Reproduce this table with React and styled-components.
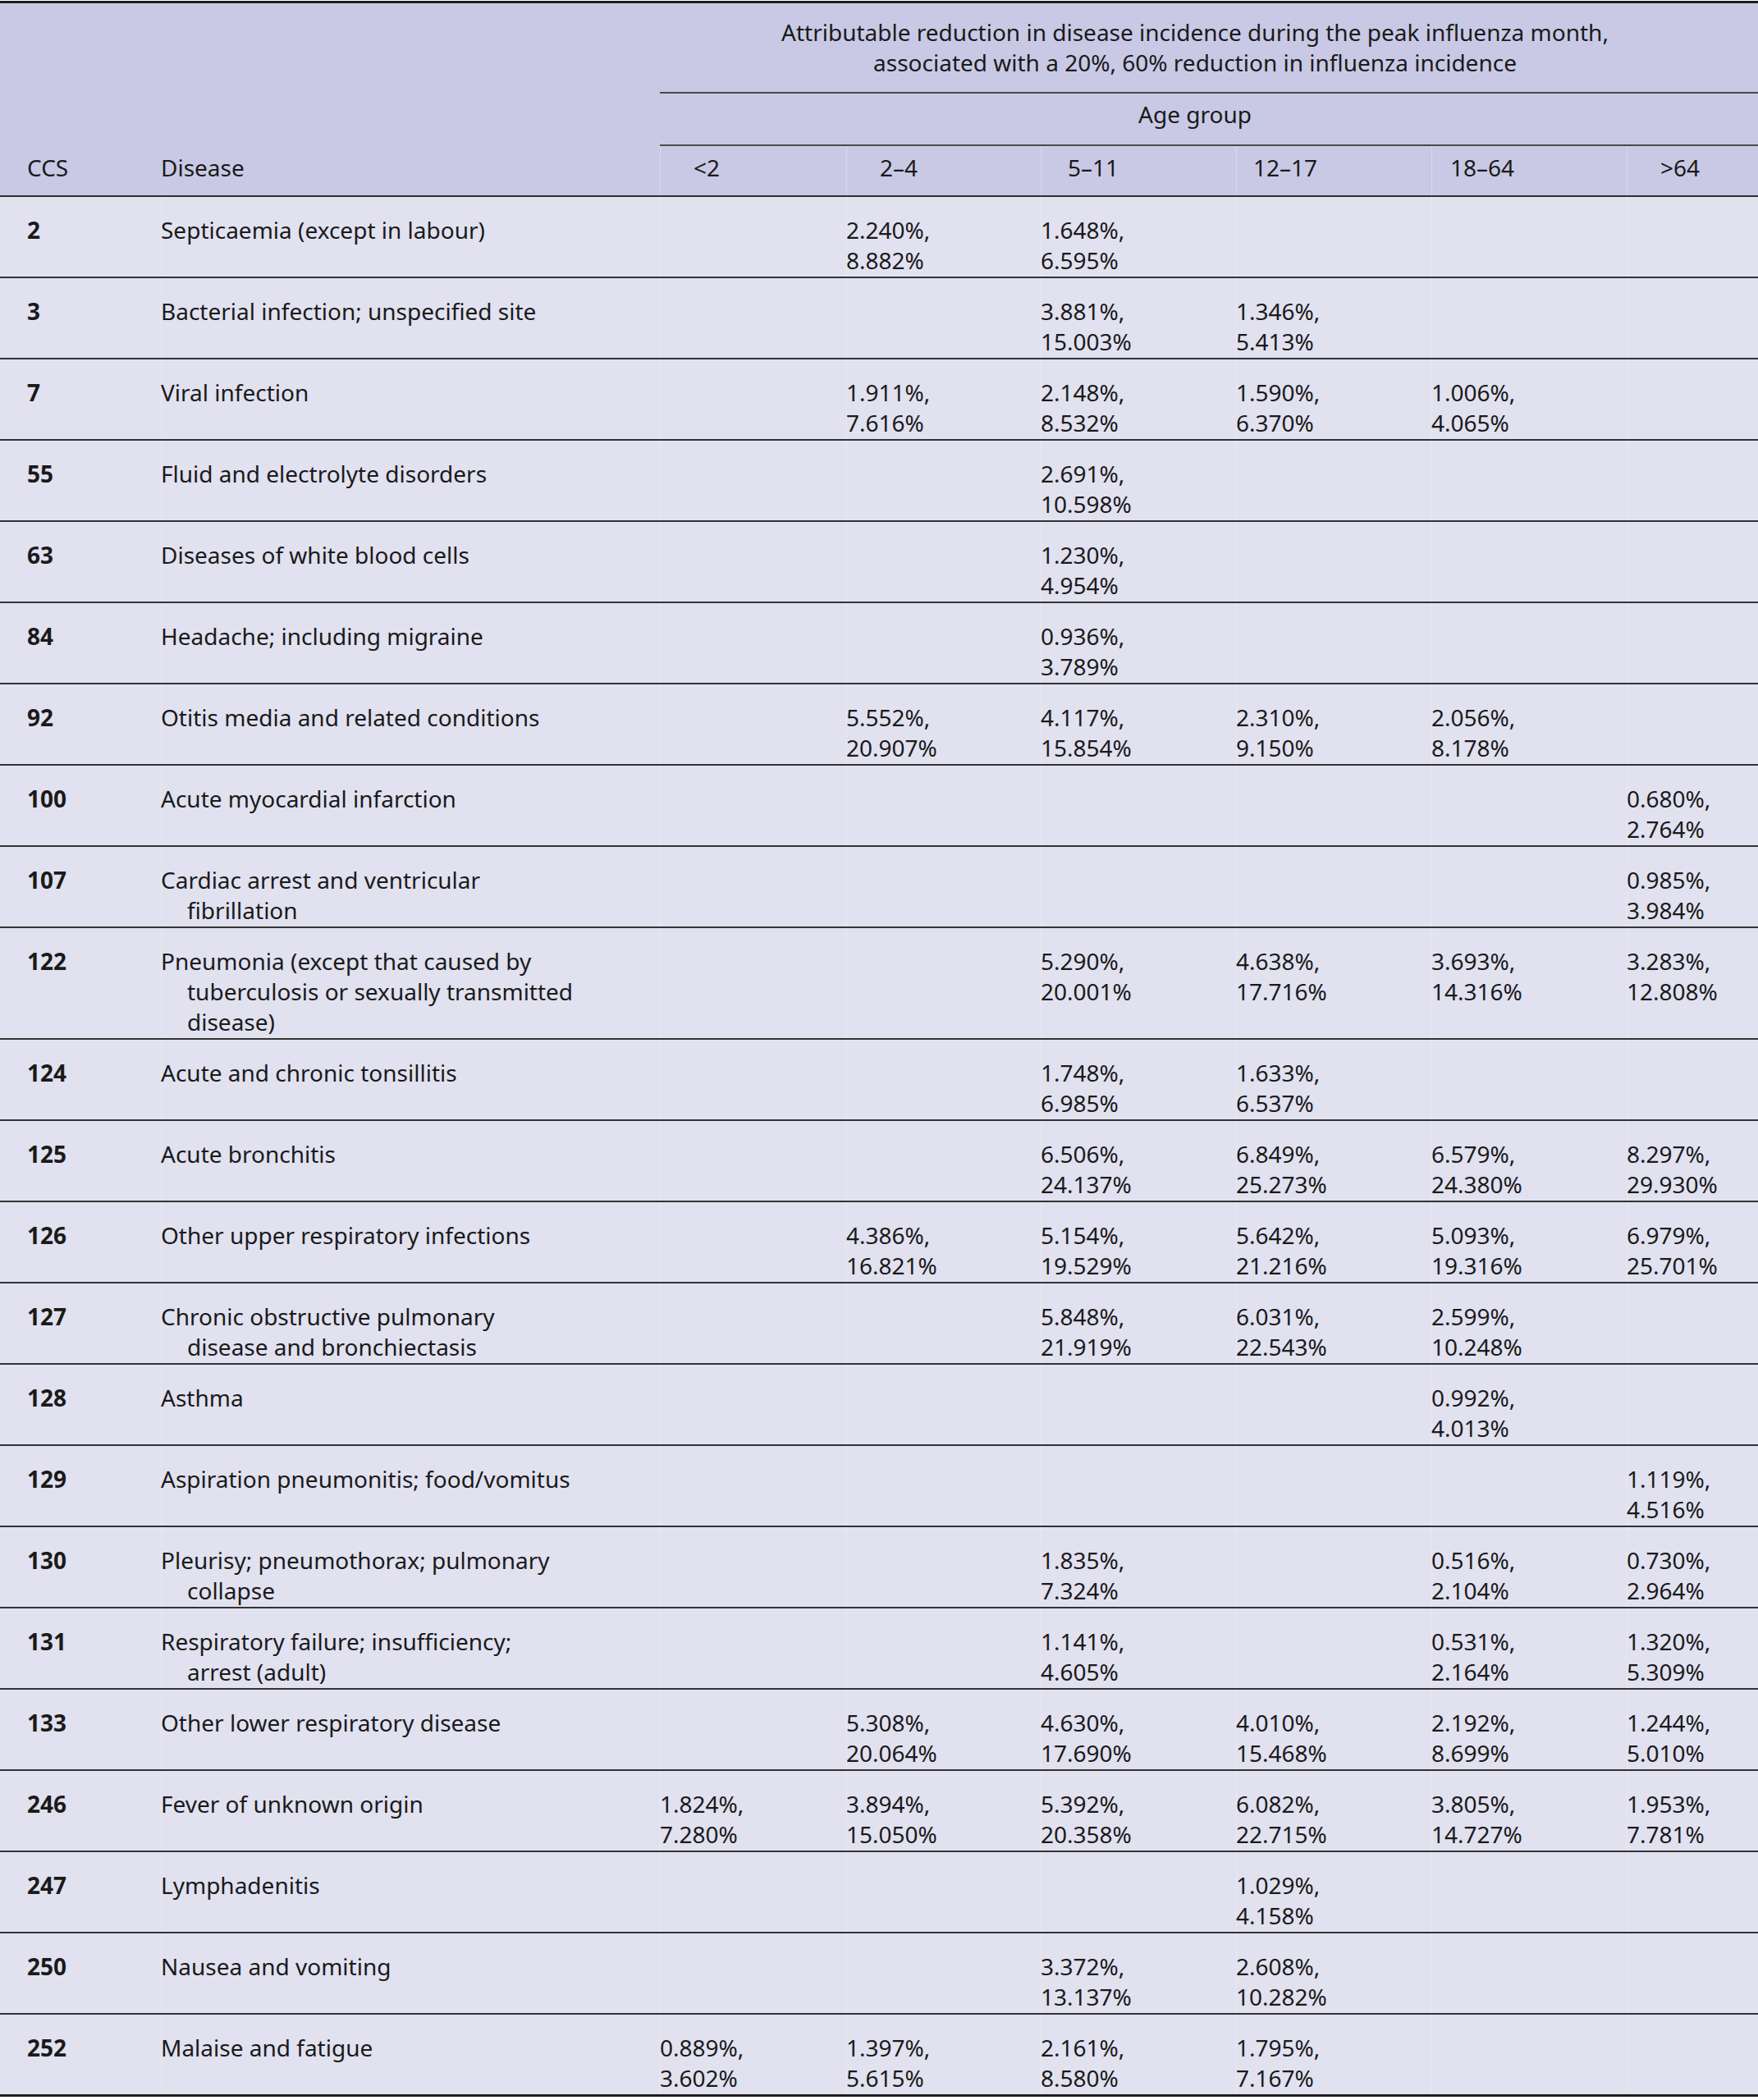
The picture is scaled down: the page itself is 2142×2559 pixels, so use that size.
import React from "react";
import styled, { createGlobalStyle } from "styled-components";

const GlobalStyle = createGlobalStyle`
  html, body {
    margin: 0;
    padding: 0;
    background: #ffffff;
  }
  body {
    font-family: "Noto Sans", "Open Sans", sans-serif;
    color: #1a1a1a;
  }
`;

const COLS = "196px 608px 227px 237px 238px 238px 238px 160px";

const Table = styled.div`
  width: 2142px;
  margin-top: 1px;
  border-top: 3px solid #1e1e1e;
  border-bottom: 3px solid #1e1e1e;
  font-size: 28px;
  line-height: 37px;
`;

const Head = styled.div`
  background: #c9c9e6;
`;

const HeadRow = styled.div`
  display: grid;
  grid-template-columns: ${COLS};
`;

const Blank = styled.div`
  grid-column: 1 / 3;
`;

const Spanner = styled.div`
  grid-column: 3 / 9;
  text-align: center;
  white-space: nowrap;
  padding: ${(p) => p.$pt}px 34px ${(p) => p.$pb}px 0;
  border-bottom: 2px solid #4a4a4a;
`;

const LabelRow = styled(HeadRow)`
  border-bottom: 2px solid #303030;
`;

const HeadText = styled.div`
  padding: 8px 0 15px ${(p) => p.$pl}px;
`;

const ColHead = styled.div`
  padding: 8px 0 15px 0;
  box-shadow: inset 1px 0 0 rgba(255, 255, 255, 0.28);
`;

const ColLabel = styled.span`
  display: block;
  width: ${(p) => p.$w}px;
  text-align: center;
`;

const Row = styled.div`
  display: grid;
  grid-template-columns: ${COLS};
  background: #e1e1f0;
  border-bottom: 2px solid #333333;

  &:last-child {
    border-bottom: none;
  }
`;

const CodeCell = styled.div`
  padding: 22px 0 1px 33px;
  font-weight: 700;
`;

const DiseaseCell = styled.div`
  padding: 22px 0 1px 0;
  box-shadow: inset 1px 0 0 rgba(255, 255, 255, 0.22);
`;

const Line = styled.span`
  display: block;
  padding-left: ${(p) => (p.$indent ? 32 : 0)}px;
  white-space: nowrap;
`;

const DataCell = styled.div`
  padding: 22px 0 1px 0;
  box-shadow: inset 1px 0 0 rgba(255, 255, 255, 0.28);
`;

const AGES = [
  { label: "<2", w: 114 },
  { label: "2–4", w: 128 },
  { label: "5–11", w: 128 },
  { label: "12–17", w: 120 },
  { label: "18–64", w: 124 },
  { label: ">64", w: 130 },
];

const ROWS = [
  ["2", ["Septicaemia (except in labour)"], ["", "2.240|8.882", "1.648|6.595", "", "", ""]],
  ["3", ["Bacterial infection; unspecified site"], ["", "", "3.881|15.003", "1.346|5.413", "", ""]],
  ["7", ["Viral infection"], ["", "1.911|7.616", "2.148|8.532", "1.590|6.370", "1.006|4.065", ""]],
  ["55", ["Fluid and electrolyte disorders"], ["", "", "2.691|10.598", "", "", ""]],
  ["63", ["Diseases of white blood cells"], ["", "", "1.230|4.954", "", "", ""]],
  ["84", ["Headache; including migraine"], ["", "", "0.936|3.789", "", "", ""]],
  ["92", ["Otitis media and related conditions"], ["", "5.552|20.907", "4.117|15.854", "2.310|9.150", "2.056|8.178", ""]],
  ["100", ["Acute myocardial infarction"], ["", "", "", "", "", "0.680|2.764"]],
  ["107", ["Cardiac arrest and ventricular", "fibrillation"], ["", "", "", "", "", "0.985|3.984"]],
  [
    "122",
    ["Pneumonia (except that caused by", "tuberculosis or sexually transmitted", "disease)"],
    ["", "", "5.290|20.001", "4.638|17.716", "3.693|14.316", "3.283|12.808"],
  ],
  ["124", ["Acute and chronic tonsillitis"], ["", "", "1.748|6.985", "1.633|6.537", "", ""]],
  ["125", ["Acute bronchitis"], ["", "", "6.506|24.137", "6.849|25.273", "6.579|24.380", "8.297|29.930"]],
  ["126", ["Other upper respiratory infections"], ["", "4.386|16.821", "5.154|19.529", "5.642|21.216", "5.093|19.316", "6.979|25.701"]],
  ["127", ["Chronic obstructive pulmonary", "disease and bronchiectasis"], ["", "", "5.848|21.919", "6.031|22.543", "2.599|10.248", ""]],
  ["128", ["Asthma"], ["", "", "", "", "0.992|4.013", ""]],
  ["129", ["Aspiration pneumonitis; food/vomitus"], ["", "", "", "", "", "1.119|4.516"]],
  ["130", ["Pleurisy; pneumothorax; pulmonary", "collapse"], ["", "", "1.835|7.324", "", "0.516|2.104", "0.730|2.964"]],
  ["131", ["Respiratory failure; insufficiency;", "arrest (adult)"], ["", "", "1.141|4.605", "", "0.531|2.164", "1.320|5.309"]],
  ["133", ["Other lower respiratory disease"], ["", "5.308|20.064", "4.630|17.690", "4.010|15.468", "2.192|8.699", "1.244|5.010"]],
  ["246", ["Fever of unknown origin"], ["1.824|7.280", "3.894|15.050", "5.392|20.358", "6.082|22.715", "3.805|14.727", "1.953|7.781"]],
  ["247", ["Lymphadenitis"], ["", "", "", "1.029|4.158", "", ""]],
  ["250", ["Nausea and vomiting"], ["", "", "3.372|13.137", "2.608|10.282", "", ""]],
  ["252", ["Malaise and fatigue"], ["0.889|3.602", "1.397|5.615", "2.161|8.580", "1.795|7.167", "", ""]],
];

function Value({ v }) {
  if (!v) return null;
  const [a, b] = v.split("|");
  return (
    <>
      <Line>{a}%,</Line>
      <Line>{b}%</Line>
    </>
  );
}

export default function App() {
  return (
    <>
      <GlobalStyle />
      <Table>
        <Head>
          <HeadRow>
            <Blank />
            <Spanner $pt={17} $pb={17}>
              Attributable reduction in disease incidence during the peak influenza month,
              <br />
              associated with a 20%, 60% reduction in influenza incidence
            </Spanner>
          </HeadRow>
          <HeadRow>
            <Blank />
            <Spanner $pt={7} $pb={18}>
              Age group
            </Spanner>
          </HeadRow>
          <LabelRow>
            <HeadText $pl={33}>CCS</HeadText>
            <HeadText $pl={0}>Disease</HeadText>
            {AGES.map((a) => (
              <ColHead key={a.label}>
                <ColLabel $w={a.w}>{a.label}</ColLabel>
              </ColHead>
            ))}
          </LabelRow>
        </Head>
        {ROWS.map(([code, lines, vals]) => (
          <Row key={code}>
            <CodeCell>{code}</CodeCell>
            <DiseaseCell>
              {lines.map((l, i) => (
                <Line key={i} $indent={i > 0}>
                  {l}
                </Line>
              ))}
            </DiseaseCell>
            {vals.map((v, i) => (
              <DataCell key={i}>
                <Value v={v} />
              </DataCell>
            ))}
          </Row>
        ))}
      </Table>
    </>
  );
}
